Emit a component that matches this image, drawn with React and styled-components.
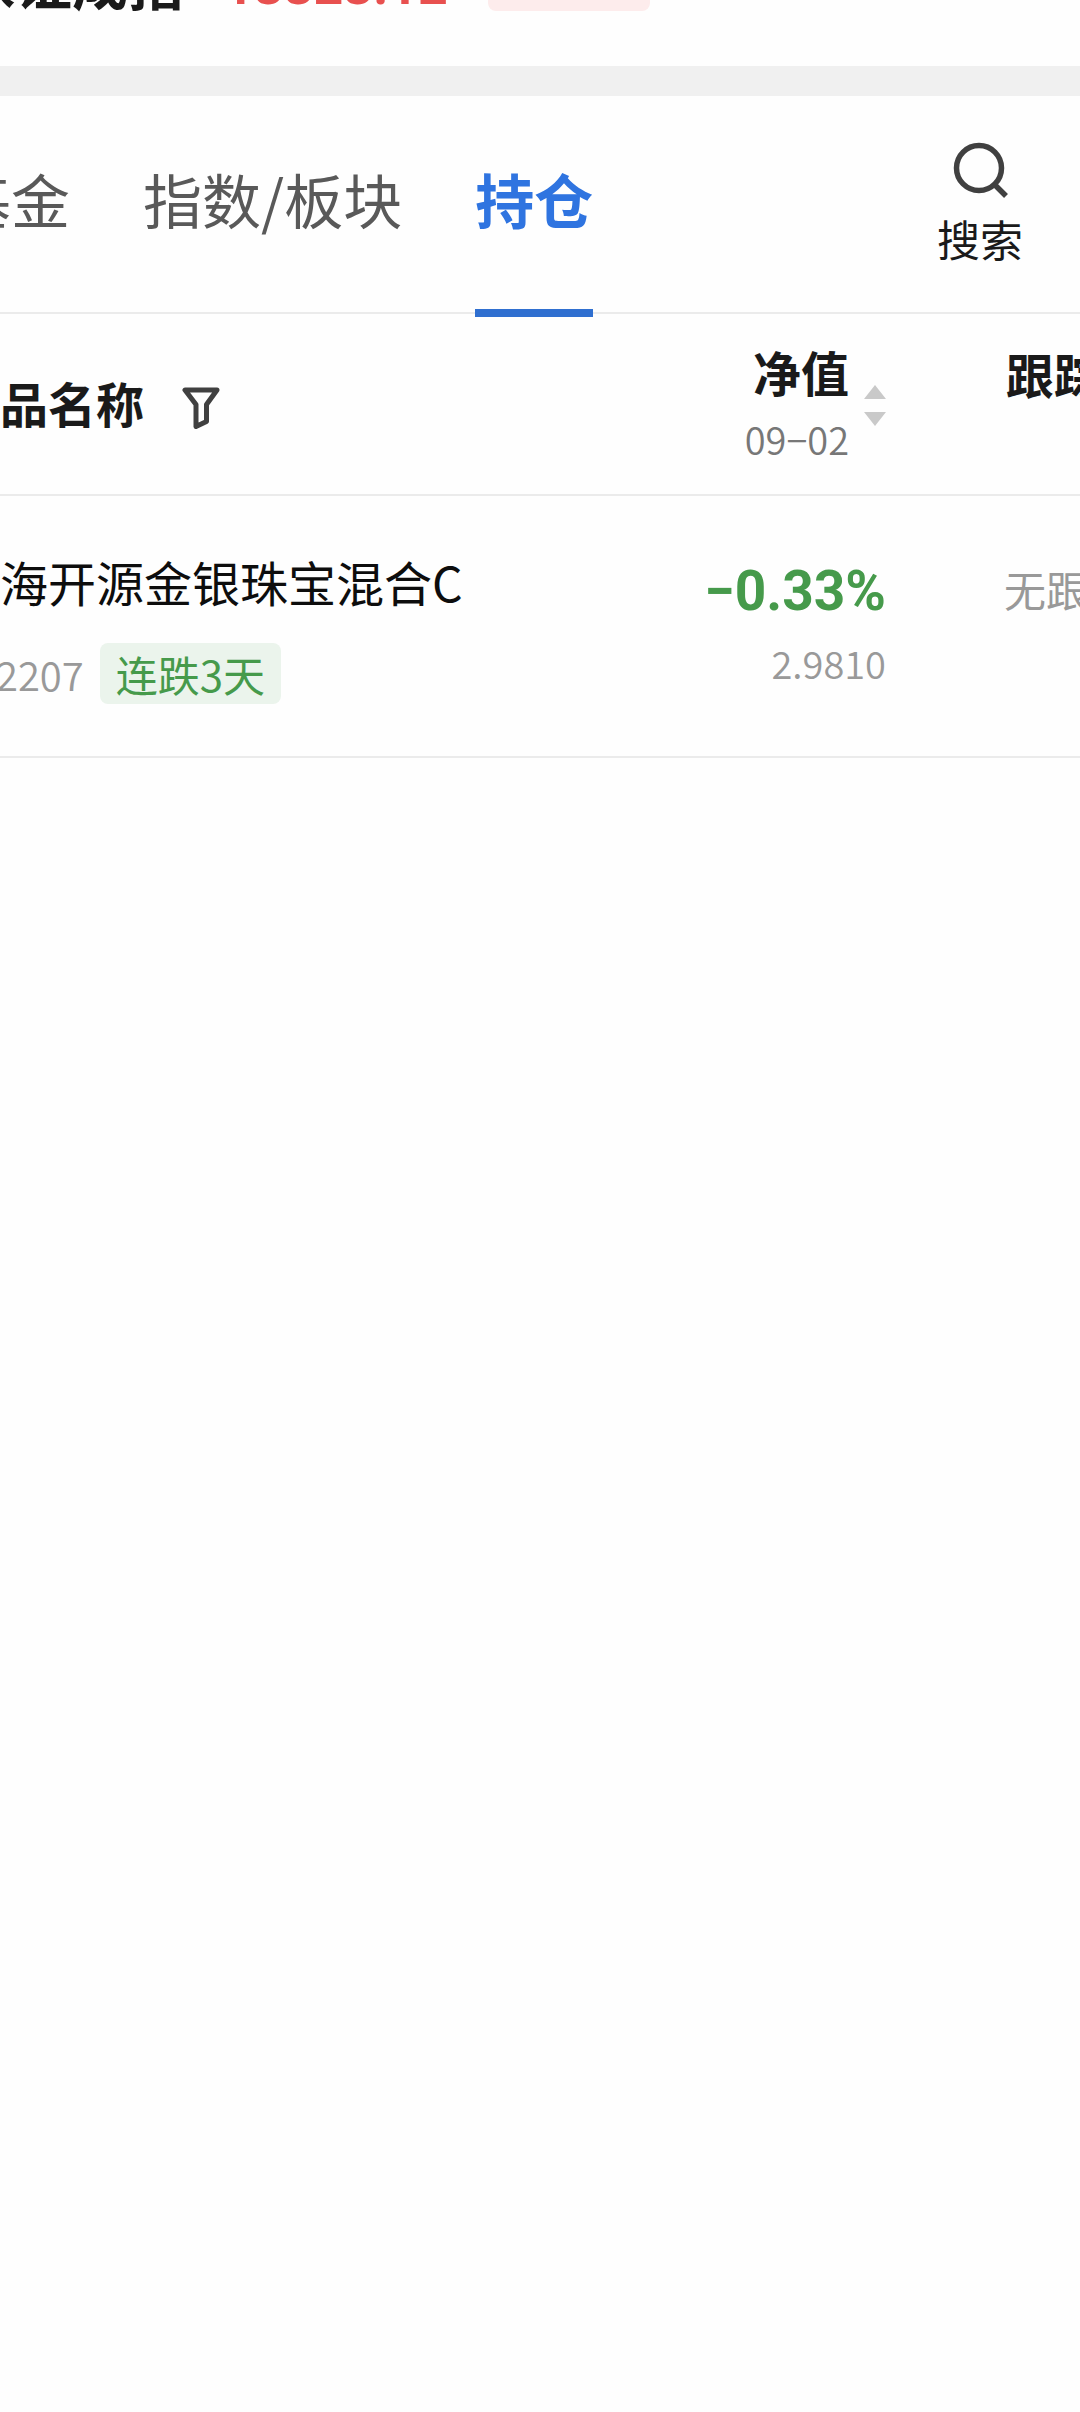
import React from 'react';
import styled, { createGlobalStyle } from 'styled-components'

const GlobalStyle = createGlobalStyle`
  * {
    box-sizing: border-box;
  }
  body {
    margin: 0;
    background: #fefefe;
    font-family: "Noto Sans CJK SC", sans-serif;
    color: #1a1a1a;
    overflow-x: hidden;
  }
  button {
    padding: 0;
    border: none;
    background: none;
    font: inherit;
    color: inherit;
  }
`

const indexItem = { name: "深证成指", value: "13323.12", change: "+0.70%" }
const tabs = ["基金", "指数/板块", "持仓"]
const funds = [
  { name: "前海开源金银珠宝混合C", code: "002207", tag: "连跌3天", change: "−0.33%", value: "2.9810", track: "无跟踪标的" }
]

function IndexBar({item}) {
  return (
    <StyledIndexBar>
      <IndexName>{item.name}</IndexName>
      <IndexValue>{item.value}</IndexValue>
      <IndexChange>{item.change}</IndexChange>
    </StyledIndexBar>
  )
}

function TabBar({active}) {
  return (
    <StyledTabBar>
      <Tabs>
        {tabs.map(tab => <Tab type="button" key={tab} $active={tab === active}>{tab}</Tab>)}
      </Tabs>
      <SearchButton type="button">
        <svg width="56" height="58" viewBox="0 0 56 58" fill="none" stroke="#404040">
          <circle cx="27" cy="26" r="22.5" strokeWidth="5.5" />
          <path d="M42 42l12 12" strokeWidth="5.5" />
        </svg>
        搜索
      </SearchButton>
    </StyledTabBar>
  )
}

function FilterIcon() {
  return (
    <svg width="38" height="42" viewBox="0 0 38 42" fill="none" stroke="#404040" strokeWidth="5" strokeLinejoin="round">
      <path d="M3 3H35L24.500 17.500V34.500L14 39.500V17.500Z" />
    </svg>
  )
}

function SortIcon() {
  return (
    <svg width="22" height="42" viewBox="0 0 22 42" fill="#c9c9c9">
      <path d="M11 1L22 15H0Z" />
      <path d="M0 28H22L11 42Z" />
    </svg>
  )
}

function FundTable() {
  return (
    <Table>
      <thead>
        <HeadRow>
          <NameHead scope="col">
            <Line $gap="38px">
              产品名称
              <FilterButton type="button" aria-label="筛选"><FilterIcon /></FilterButton>
            </Line>
          </NameHead>
          <ValueHead scope="col">
            <SortButton type="button">
              <span>净值<HeadDate>09−02</HeadDate></span>
              <SortIcon />
            </SortButton>
          </ValueHead>
          <TrackHead scope="col">跟踪标的</TrackHead>
        </HeadRow>
      </thead>
      <tbody>
        {funds.map(fund => (
          <FundRow key={fund.code}>
            <td>
              <FundName>{fund.name}</FundName>
              <Line $gap="16px">
                <Code>{fund.code}</Code>
                <Tag>{fund.tag}</Tag>
              </Line>
            </td>
            <ValueCell>
              <Change>{fund.change}</Change>
              <NetValue>{fund.value}</NetValue>
            </ValueCell>
            <TrackCell>{fund.track}</TrackCell>
          </FundRow>
        ))}
      </tbody>
    </Table>
  )
}

function App() {
  return (
    <Page>
      <GlobalStyle />
      <IndexBar item={indexItem} />
      <TabBar active="持仓" />
      <FundTable />
    </Page>
  );
}

const Page = styled.main`
  width: 100%;
  min-height: 100vh;
  overflow: hidden;
`

// the bar is scrolled mostly out of view, so its items hang above the top edge
const StyledIndexBar = styled.section`
  display: flex;
  align-items: flex-end;
  gap: 40px;
  height: 96px;
  margin-left: -40px;
  padding-bottom: 55px;
  border-bottom: 30px solid #f0f0f0;
`

const IndexName = styled.span`
  font-size: 56px;
  font-weight: 700;
  line-height: 60px;
`

const IndexValue = styled.span`
  font-family: Roboto, sans-serif;
  font-size: 52px;
  font-weight: 700;
  line-height: 48px;
  color: #e8504f;
`

const IndexChange = styled.span`
  padding: 0 16px;
  border-radius: 8px;
  background: #fdecec;
  font-family: Roboto, sans-serif;
  font-size: 40px;
  line-height: 48px;
  color: #e8504f;
`

const StyledTabBar = styled.nav`
  display: flex;
  justify-content: space-between;
  height: 218px;
  padding-right: 57px;
  border-bottom: 2px solid #ebebeb;
`

const Tabs = styled.div`
  display: flex;
  gap: 73px;
  height: 221px;
  margin-left: -48px;
`

const Tab = styled.button`
  padding-bottom: 8px;
  border-bottom: 8px solid ${props => props.$active ? "#2f6fd0" : "transparent"};
  font-size: 59px;
  font-weight: ${props => props.$active ? 700 : 400};
  white-space: nowrap;
  color: ${props => props.$active ? "#2f74e0" : "#595959"};
`

const SearchButton = styled.button`
  display: flex;
  flex-direction: column;
  align-items: center;
  align-self: flex-start;
  gap: 10px;
  padding-top: 46px;
  font-size: 43px;
  line-height: 56px;
`

const Table = styled.table`
  width: calc(100% + 210px);
  margin-left: -48px;
  table-layout: fixed;
  border-collapse: collapse;
  text-align: left;
`

const HeadRow = styled.tr`
  height: 181px;
  border-bottom: 2px solid #ebebeb;
  font-size: 48px;
  th {
    padding: 0;
    font-weight: 700;
    white-space: nowrap;
  }
`

const FundRow = styled.tr`
  height: 262px;
  border-bottom: 2px solid #ebebeb;
  vertical-align: top;
  white-space: nowrap;
  td {
    padding: 53px 0 0;
  }
`

const Line = styled.div`
  display: flex;
  align-items: center;
  gap: ${props => props.$gap};
`

const FilterButton = styled.button`
  display: flex;
  padding-top: 12px;
`

const NameHead = styled.th`
  width: 542px;
  && {
    padding-bottom: 4px;
  }
`

const ValueHead = styled.th`
  width: 392px;
  && {
    padding-top: 2px;
  }
`

const SortButton = styled.button`
  display: flex;
  align-items: center;
  gap: 15px;
  margin-left: auto;
  text-align: right;
  line-height: 68px;
`

const HeadDate = styled.span`
  display: block;
  font-size: 38px;
  font-weight: 350;
  color: #777;
`

const TrackHead = styled.th`
  vertical-align: top;
  line-height: 68px;
  && {
    padding: 25px 0 0 120px;
  }
`

const FundName = styled.div`
  margin-bottom: 30px;
  font-size: 48px;
  line-height: 64px;
  color: #0d0d0d;
`

const Code = styled.span`
  font-size: 40px;
  font-weight: 350;
  line-height: 56px;
  color: #999;
`

const Tag = styled.span`
  padding: 0 16px;
  border-radius: 8px;
  background: #ebf4ec;
  font-size: 42px;
  line-height: 61px;
  color: #469a4b;
`

const ValueCell = styled.td`
  text-align: right;
`

const Change = styled.div`
  margin-bottom: 2px;
  font-family: Roboto, sans-serif;
  font-size: 55px;
  font-weight: 700;
  line-height: 84px;
  color: #469a4b;
`

const NetValue = styled.div`
  font-size: 38px;
  font-weight: 350;
  line-height: 56px;
  color: #999;
`

const TrackCell = styled.td`
  font-size: 42px;
  line-height: 80px;
  color: #999;
  && {
    padding-left: 118px;
  }
`

export default App;
